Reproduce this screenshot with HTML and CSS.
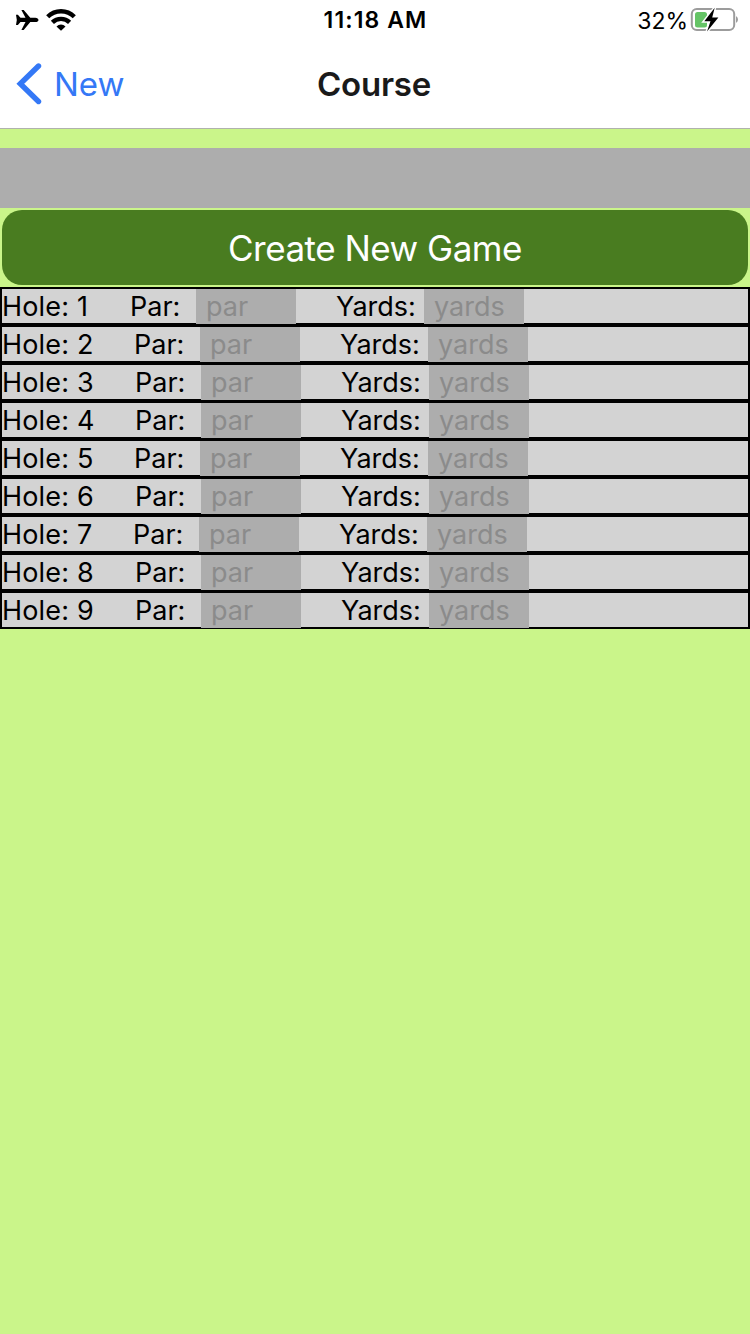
FILE: index.html
```html
<!DOCTYPE html>
<html lang="en">
<head>
<meta charset="utf-8">
<title>Course</title>
<link rel="stylesheet" href="styles.css">
</head>
<body>
<header class="header">
  <div class="status">
    <div class="status-left">
      <svg class="plane" width="24" height="22" viewBox="0 0 24 22"><path d="M1 5.800h1.900l2.600 2.900h5L6.400 1h2.300l6.600 7.700h5c1.900 0 3.200 1.200 3.200 2.200s-1.300 2.200-3.200 2.200h-5L8.700 21H6.400l4.100-7.900h-5L2.900 16H1l.8-5.100z"/></svg>
      <svg class="wifi" width="30" height="22" viewBox="0 0 30 22"><g fill="none" stroke="#000" stroke-width="4.400"><path d="M1.700 7.800a18.800 18.800 0 0 1 26.600 0"/><path d="M6.400 13.400a12.200 12.200 0 0 1 17.200 0"/></g><path d="M10.500 17.400a6.400 6.400 0 0 1 9 0L15 21.800z"/></svg>
    </div>
    <div class="time">11:18 AM</div>
    <div class="status-right">
      <span class="percent">32%</span>
      <svg width="48" height="26" viewBox="0 0 48 26"><rect x="1.800" y="3" width="42.400" height="21" rx="5" fill="none" stroke="#9c9c9c" stroke-width="2"/><path d="M46 10.300c2.600 1 2.600 5.400 0 6.400z" fill="#9c9c9c"/><rect x="5" y="6" width="12" height="15.500" rx="2.500" fill="#65c466"/><path d="M24.700 1.800L14.300 15.200h6.200L17 25.400l11.400-13.800h-6.200z" fill="#000" stroke="#fff" stroke-width="3" paint-order="stroke"/></svg>
    </div>
  </div>
  <nav class="nav">
    <a class="back"><svg width="26" height="42" viewBox="0 0 26 42"><path d="M22.500 3L4.300 20.800 22.500 38.500" fill="none" stroke="#3478f6" stroke-width="5.400" stroke-linecap="round"/></svg><span class="back-text">New</span></a>
    <h1 class="title">Course</h1>
  </nav>
</header>
<main class="content">
  <div class="name-field"></div>
  <button class="create"><span class="create-text">Create New Game</span></button>
  <div class="holes">
    <div class="row d1"><span class="hole">Hole: 1</span><span class="par">Par:</span><input class="field" placeholder="par"><span class="yards">Yards:</span><input class="field" placeholder="yards"></div>
    <div class="row d2"><span class="hole">Hole: 2</span><span class="par">Par:</span><input class="field" placeholder="par"><span class="yards">Yards:</span><input class="field" placeholder="yards"></div>
    <div class="row"><span class="hole">Hole: 3</span><span class="par">Par:</span><input class="field" placeholder="par"><span class="yards">Yards:</span><input class="field" placeholder="yards"></div>
    <div class="row"><span class="hole">Hole: 4</span><span class="par">Par:</span><input class="field" placeholder="par"><span class="yards">Yards:</span><input class="field" placeholder="yards"></div>
    <div class="row d2"><span class="hole">Hole: 5</span><span class="par">Par:</span><input class="field" placeholder="par"><span class="yards">Yards:</span><input class="field" placeholder="yards"></div>
    <div class="row"><span class="hole">Hole: 6</span><span class="par">Par:</span><input class="field" placeholder="par"><span class="yards">Yards:</span><input class="field" placeholder="yards"></div>
    <div class="row d7"><span class="hole">Hole: 7</span><span class="par">Par:</span><input class="field" placeholder="par"><span class="yards">Yards:</span><input class="field" placeholder="yards"></div>
    <div class="row"><span class="hole">Hole: 8</span><span class="par">Par:</span><input class="field" placeholder="par"><span class="yards">Yards:</span><input class="field" placeholder="yards"></div>
    <div class="row"><span class="hole">Hole: 9</span><span class="par">Par:</span><input class="field" placeholder="par"><span class="yards">Yards:</span><input class="field" placeholder="yards"></div>
  </div>
</main>
</body>
</html>
```
FILE: styles.css
```css
* { box-sizing: border-box; }
body { margin: 0; height: 1334px; background: #caf58a; font-family: Inter, "Liberation Sans", sans-serif; color: #000; overflow: hidden; }
svg { display: block; }
.header { height: 129px; background: #fff; border-bottom: 1px solid #b0b2ad; }
.status { display: grid; grid-template-columns: 1fr auto 1fr; height: 40px; }
.status-left { display: flex; gap: 7px; padding: 9px 0 0 15px; }
.time { font-size: 23px; font-weight: 600; line-height: 41px; letter-spacing: 1.1px; margin-right: -1px; white-space: nowrap; }
.status-right { display: flex; justify-content: flex-end; padding: 6px 12px 0 0; gap: 2px; }
.percent { font-size: 23px; line-height: 31px; }
.nav { display: grid; grid-template-columns: 1fr auto 1fr; height: 88px; align-items: center; }
.back { display: flex; align-items: center; gap: 12px; padding-left: 16px; color: #3478f6; }
.back-text { font-size: 33px; line-height: 40px; }
.title { margin: 0 1px 0 -1px; font-size: 33px; font-weight: 600; line-height: 40px; letter-spacing: -0.2px; color: #1a1a1a; }
.content { padding-top: 19px; }
.name-field { height: 60px; background: #adadad; }
.create { display: block; width: 746px; height: 75px; margin: 2px; padding: 1px 0 0; border: 0; border-radius: 20px; background: #497c20; color: #fff; font-family: inherit; font-size: 35px; line-height: 44px; letter-spacing: -0.5px; }
.row { display: flex; height: 38px; border: 2px solid #000; background: #d3d3d3; font-size: 27px; line-height: 35px; white-space: nowrap; }
.hole { width: 133px; flex: none; letter-spacing: 0.18px; }
.d1 .hole { width: 128px; }
.d2 .hole { width: 132px; }
.d7 .hole { width: 131px; }
.par { width: 66px; flex: none; }
.yards { width: 128px; flex: none; padding-left: 40px; }
.field { width: 100px; height: 35px; flex: none; border: 0; padding: 0 10px; background: #adadad; font: inherit; outline: 0; }
.field::placeholder { color: #8b8b8b; opacity: 1; }
```
